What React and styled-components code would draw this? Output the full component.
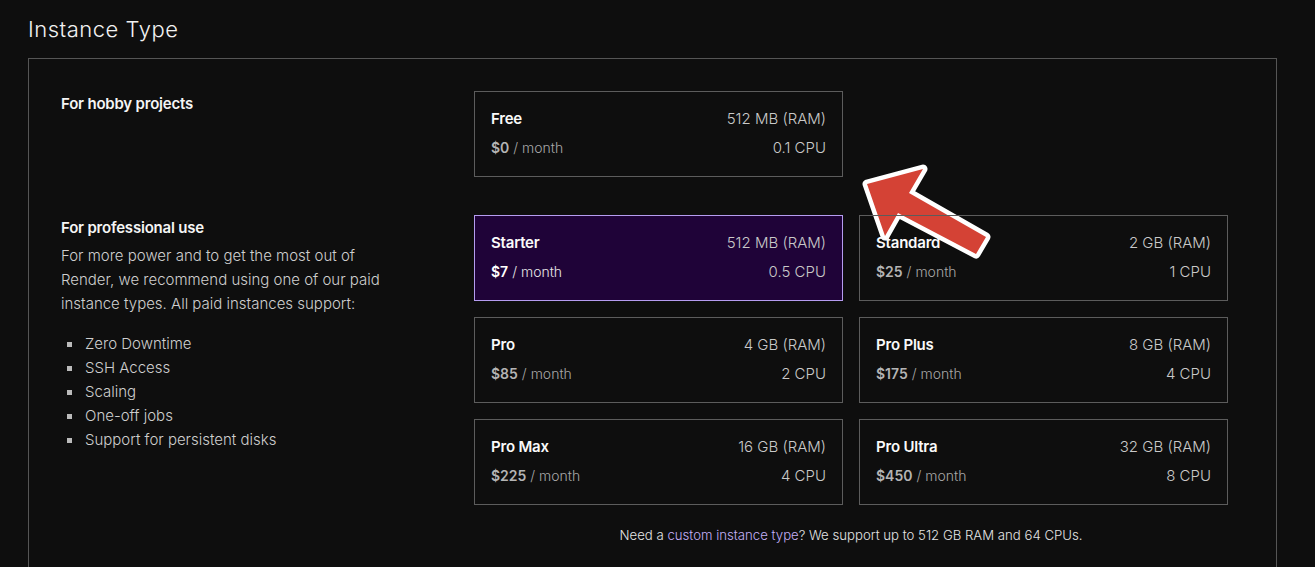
import React from 'react'
import styled, { createGlobalStyle } from 'styled-components'

const GlobalStyle = createGlobalStyle`
  html, body {
    margin: 0;
    padding: 0;
    background: #0e0e0e;
  }
  body {
    font-family: Inter, "Liberation Sans", sans-serif;
    color: #e6e6e6;
  }
`

const Page = styled.div`
  padding: 15px 38px 0 28px;
`

const Title = styled.h2`
  margin: 0 0 15px;
  font-size: 22px;
  line-height: 28px;
  font-weight: 300;
  color: #f2f2f2;
  letter-spacing: 0.5px;
`

const Panel = styled.section`
  border: 1px solid #555;
  border-bottom: none;
  padding: 32px 0 40px 32px;
`

const Row = styled.div`
  display: grid;
  grid-template-columns: 413px 754px;
  margin-bottom: ${p => p.$gap || 0}px;
`

const Side = styled.div`
  padding: 1px 40px 0 0;
`

const Label = styled.h3`
  margin: 0 0 4px;
  font-size: 15px;
  line-height: 24px;
  font-weight: 600;
  color: #f5f5f5;
  letter-spacing: -0.2px;
`

const Text = styled.p`
  margin: 0 0 16px;
  max-width: 330px;
  font-size: 15px;
  line-height: 24px;
  font-weight: 300;
  color: #cfcfcf;
`

const List = styled.ul`
  margin: 0;
  padding: 0 0 0 6px;
  list-style: none;
`

const Item = styled.li`
  display: flex;
  align-items: center;
  gap: 13px;
  font-size: 15px;
  line-height: 24px;
  font-weight: 300;
  color: #cfcfcf;
  &::before {
    content: '';
    width: 5px;
    height: 5px;
    background: #bbb;
  }
`

const Grid = styled.div`
  position: relative;
  display: grid;
  grid-template-columns: 369px 369px;
  column-gap: 16px;
  row-gap: 16px;
`

const Card = styled.div`
  display: grid;
  grid-template-columns: 1fr auto;
  row-gap: 7px;
  padding: 16px 16px 17px;
  border: 1px solid ${p => (p.$active ? '#b59cf0' : '#5c5c5c')};
  background: ${p => (p.$active ? '#1f0338' : 'transparent')};
`

const Name = styled.div`
  font-size: 15px;
  line-height: 22px;
  font-weight: 600;
  color: #fafafa;
  letter-spacing: -0.2px;
`

const Spec = styled.div`
  text-align: right;
  font-size: 15px;
  line-height: 22px;
  font-weight: 300;
  color: #c9c9c9;
`

const Price = styled.div`
  font-size: 14px;
  line-height: 22px;
  font-weight: 300;
  color: ${p => (p.$active ? '#e8e8e8' : '#a8a8a8')};
  b {
    font-weight: 600;
    color: ${p => (p.$active ? '#fff' : '#b4b4b4')};
  }
`

const Footer = styled.p`
  grid-column: 1 / -1;
  margin: 3px 0 0;
  text-align: center;
  font-size: 13.2px;
  line-height: 22px;
  font-weight: 300;
  color: #e4e4e4;
  a {
    color: #c3b0f7;
    text-decoration: none;
  }
`

const Arrow = styled.svg`
  position: absolute;
  left: 381px;
  top: 69px;
  overflow: visible;
`

const plans = [
  { name: 'Starter', price: 7, ram: '512 MB', cpu: '0.5', active: true },
  { name: 'Standard', price: 25, ram: '2 GB', cpu: '1' },
  { name: 'Pro', price: 85, ram: '4 GB', cpu: '2' },
  { name: 'Pro Plus', price: 175, ram: '8 GB', cpu: '4' },
  { name: 'Pro Max', price: 225, ram: '16 GB', cpu: '4' },
  { name: 'Pro Ultra', price: 450, ram: '32 GB', cpu: '8' },
]

const Plan = ({ name, price, ram, cpu, active }) => (
  <Card $active={active}>
    <Name>{name}</Name>
    <Spec>{ram} (RAM)</Spec>
    <Price $active={active}>
      <b>${price}</b> / month
    </Price>
    <Spec>{cpu} CPU</Spec>
  </Card>
)

export default function App() {
  return (
    <>
      <GlobalStyle />
      <Page>
        <Title>Instance Type</Title>
        <Panel>
          <Row $gap={38}>
            <Side>
              <Label>For hobby projects</Label>
            </Side>
            <Grid>
              <Plan name="Free" price={0} ram="512 MB" cpu="0.1" />
              <Arrow width="145" height="105" viewBox="0 0 145 105">
                <polygon
                  points="12,24 68,9 54,33 131,77 121,94 43,53 30,76"
                  fill="#d44235"
                  stroke="#fff"
                  strokeWidth="9"
                  strokeLinejoin="round"
                  paintOrder="stroke"
                />
              </Arrow>
            </Grid>
          </Row>
          <Row>
            <Side>
              <Label>For professional use</Label>
              <Text>
                For more power and to get the most out of Render, we recommend
                using one of our paid instance types. All paid instances support:
              </Text>
              <List>
                <Item>Zero Downtime</Item>
                <Item>SSH Access</Item>
                <Item>Scaling</Item>
                <Item>One-off jobs</Item>
                <Item>Support for persistent disks</Item>
              </List>
            </Side>
            <Grid>
              {plans.map(p => (
                <Plan key={p.name} {...p} />
              ))}
              <Footer>
                Need a <a href="#custom">custom instance type</a>? We support up
                to 512 GB RAM and 64 CPUs.
              </Footer>
            </Grid>
          </Row>
        </Panel>
      </Page>
    </>
  )
}
